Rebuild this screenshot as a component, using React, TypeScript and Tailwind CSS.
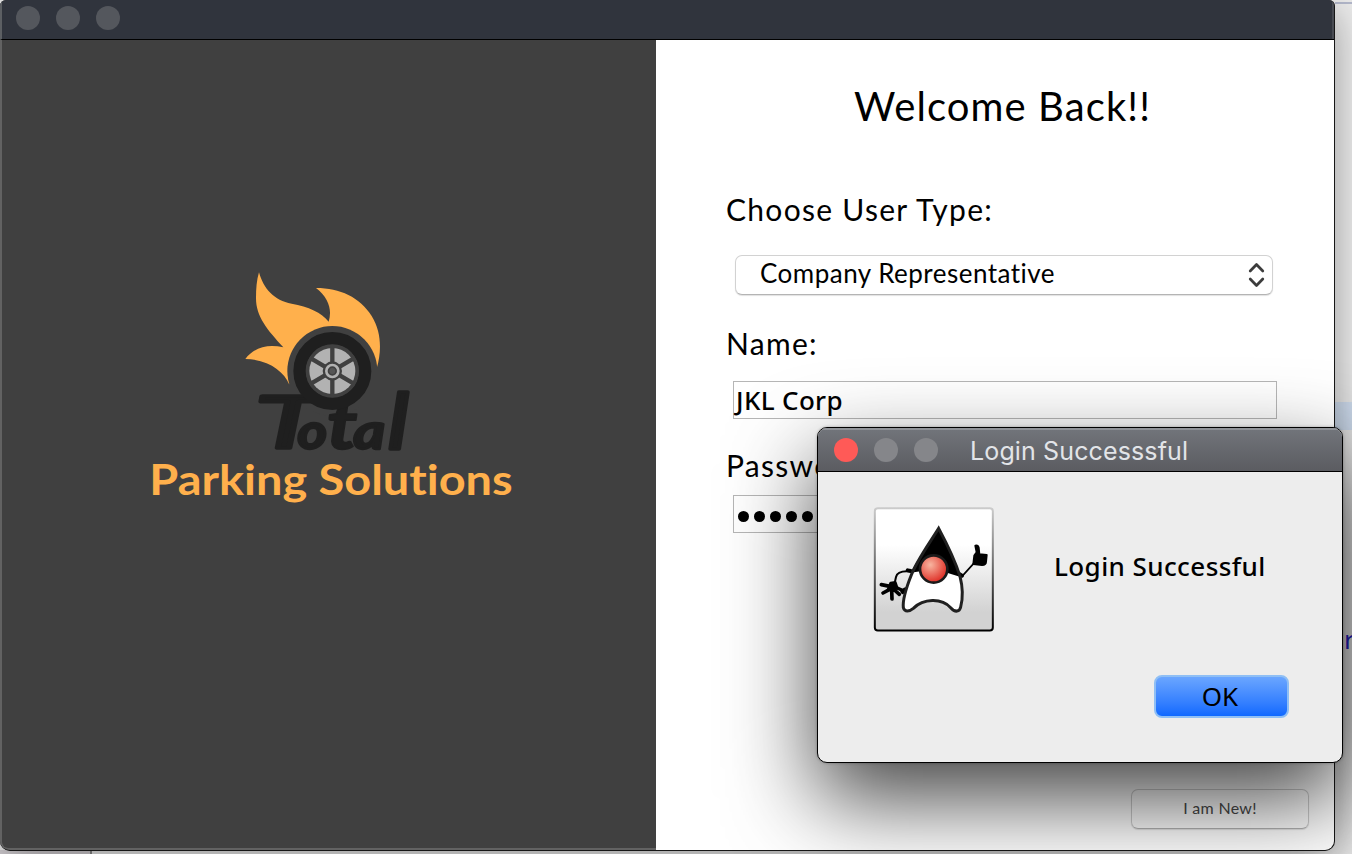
function Logo() {
  return (
    <svg width="390" height="260" viewBox="0 0 1170 780" className="block">
      <path
        fill="#ffb04c"
        d="M357 37C370 85 402 122 455 131C505 140 545 157 566 185C577 150 566 113 528 84C600 84 660 112 695 168C726 218 724 275 711 322L577 400L447 372C432 335 385 298 316 297C342 262 382 252 430 262C382 210 348 170 348 115C348 85 350 60 357 37Z"
      />
      <circle cx="577" cy="333" r="135" fill="#404040" />
      <g fill="#1f1f1f" stroke="#1f1f1f" strokeLinejoin="round" fontFamily="Lato, sans-serif" fontStyle="italic">
        <text x="344" y="565" fontSize="214" fontWeight="400" strokeWidth="11" textLength="200" lengthAdjust="spacingAndGlyphs">T</text>
        <text x="472" y="567" fontSize="150" fontWeight="700" strokeWidth="7" textLength="90" lengthAdjust="spacingAndGlyphs">o</text>
        <text x="560" y="567" fontSize="205" fontWeight="700" strokeWidth="5" textLength="92" lengthAdjust="spacingAndGlyphs">t</text>
        <text x="640" y="567" fontSize="150" fontWeight="700" strokeWidth="7" textLength="96" lengthAdjust="spacingAndGlyphs">a</text>
        <text x="742" y="567" fontSize="232" fontWeight="400" strokeWidth="10" textLength="66" lengthAdjust="spacingAndGlyphs">l</text>
      </g>
      <circle cx="577" cy="333" r="98" fill="none" stroke="#1f1f1f" strokeWidth="38" />
      <circle cx="577" cy="333" r="80" fill="#404040" />
      <circle cx="577" cy="333" r="69" fill="#b2b2b2" />
      <g stroke="#404040" strokeWidth="13">
        <path d="M577 260V406M514 296L640 370M514 370L640 296" />
      </g>
      <circle cx="577" cy="333" r="29" fill="#404040" />
      <circle cx="577" cy="333" r="18" fill="none" stroke="#b2b2b2" strokeWidth="8" />
      <circle cx="577" cy="333" r="9" fill="#555" />
      <text
        x="28"
        y="704"
        fontSize="125"
        fontWeight="700"
        fontFamily="Lato, sans-serif"
        fill="#ffb04c"
        textLength="1090"
        lengthAdjust="spacingAndGlyphs"
        className="[font-variant-ligatures:none]"
      >
        Parking Solutions
      </text>
    </svg>
  );
}

function Duke() {
  return (
    <svg width="150" height="150" viewBox="0 0 450 450" className="block shrink-0">
      <defs>
        <linearGradient id="tile" x1="0" y1="0" x2="0" y2="1">
          <stop offset="0.3" stopColor="#fff" />
          <stop offset="0.85" stopColor="#d2d2d2" />
        </linearGradient>
        <linearGradient id="edge" x1="0" y1="0" x2="0" y2="1">
          <stop offset="0" stopColor="#cbcbcb" />
          <stop offset="1" stopColor="#000" />
        </linearGradient>
        <radialGradient id="nose" cx="0.38" cy="0.35" r="0.65">
          <stop offset="0" stopColor="#f8b5a0" />
          <stop offset="1" stopColor="#df3027" />
        </radialGradient>
      </defs>
      <rect x="44.500" y="39.500" width="354" height="367" rx="9" fill="url(#tile)" stroke="url(#edge)" strokeWidth="6" />
      <g stroke="#000" fill="none" strokeLinecap="round" strokeLinejoin="round">
        <path d="M150 229Q112 226 108 246L104 264" strokeWidth="6" />
        <path d="M143 226L152 228" strokeWidth="12" />
        <path d="M132 288L110 278" strokeWidth="10" />
        <path d="M128 290L136 284" strokeWidth="14" />
        <path d="M92 264L106 262L112 280L84 284Z" fill="#000" strokeWidth="8" />
        <path d="M90 274L64 269M88 284L69 294M95 284L96 312M100 282L118 298" strokeWidth="11" />
        <path d="M306 244L344 202" strokeWidth="5" />
        <path d="M296 236L306 242" strokeWidth="12" />
        <path d="M343 182L340 207L366 210Q378 209 378 200L380 180L358 178L356 158Q354 150 346 152L350 172Z" fill="#000" strokeWidth="6" />
      </g>
      <path d="M236 100C205 150 170 198 154 240C136 285 128 320 130 338C134 352 148 350 160 340C190 310 245 308 272 338C286 354 299 350 302 336C310 305 308 275 300 244C285 195 260 145 236 100Z" fill="#fff" />
      <path d="M236 100C205 150 170 198 152 233L186 228L256 232L302 246C285 195 260 145 236 100Z" fill="#000" />
      <path
        d="M236 100C205 150 170 198 154 240C136 285 128 320 130 338C134 352 148 350 160 340C190 310 245 308 272 338C286 354 299 350 302 336C310 305 308 275 300 244C285 195 260 145 236 100Z"
        fill="none"
        stroke="#202020"
        strokeWidth="9"
      />
      <circle cx="221" cy="222" r="41" fill="url(#nose)" stroke="#1a1a1a" strokeWidth="8" />
    </svg>
  );
}

function Lights({ first, rest }: { first: string; rest: string }) {
  return (
    <div className="flex gap-4">
      <span className={`size-6 rounded-full ${first}`} />
      <span className={`size-6 rounded-full ${rest}`} />
      <span className={`size-6 rounded-full ${rest}`} />
    </div>
  );
}

const label = "overflow-hidden whitespace-nowrap text-[30px] leading-[38px] h-[36px] tracking-[1.28px]";

function LoginForm() {
  return (
    <div className="flex h-[810px] flex-1 flex-col bg-white font-['Lato',sans-serif] text-black">
      <h1 className="mt-[42px] ml-[15px] text-center text-[40px] leading-[48px] tracking-[1.1px]">Welcome Back!!</h1>
      <div className={`${label} mt-[60px] ml-[70px]`}>Choose User Type:</div>
      <div className="mt-[29px] ml-[79px] flex h-[40px] w-[538px] items-center justify-between rounded-[7px] border border-[#d2d2d2] border-b-[#b4b4b4] bg-white pr-[7px] pl-6 shadow-[0_1px_1px_rgba(0,0,0,0.12)]">
        <span className="pb-[5px] text-[26px] leading-[32px] tracking-[0.48px]">Company Representative</span>
        <svg width="17" height="26" viewBox="0 0 17 26" fill="none" stroke="#3c3c3c" strokeWidth="2.700" strokeLinecap="round" strokeLinejoin="round">
          <path d="M2.200 9L8.500 2.500L14.800 9M2.200 17L8.500 23.500L14.800 17" />
        </svg>
      </div>
      <div className={`${label} mt-[29px] ml-[70px]`}>Name:</div>
      <div className="mt-[21px] ml-[77px] h-[38px] w-[544px] border border-[#b6b6b6] pl-[2px] font-['Noto_Sans',sans-serif] text-[26px] leading-[36px] font-medium tracking-[0.35px]">
        JKL Corp
      </div>
      <div className={`${label} mt-[27px] ml-[70px]`}>Password:</div>
      <div className="mt-[13px] ml-[77px] flex h-[38px] w-[544px] items-center gap-[5px] border border-[#b6b6b6] pt-[4px] pl-[4px]">
        <span className="size-[11px] rounded-full bg-black" />
        <span className="size-[11px] rounded-full bg-black" />
        <span className="size-[11px] rounded-full bg-black" />
        <span className="size-[11px] rounded-full bg-black" />
        <span className="size-[11px] rounded-full bg-black" />
      </div>
      <button className="mt-[256px] mr-[25px] h-[40px] w-[178px] self-end rounded-[7px] border border-[#cfcfcf] border-b-[#b4b4b4] pb-[2px] text-[16px] tracking-[0.3px] text-[#4a4a4a] shadow-[0_1px_1px_rgba(0,0,0,0.12)]">
        I am New!
      </button>
    </div>
  );
}

function Dialog() {
  return (
    <div className="absolute top-[427px] left-[817px] flex h-[336px] w-[526px] flex-col overflow-hidden rounded-[10px] border border-black bg-[#ededed] shadow-[0_36px_88px_rgba(0,0,0,0.74),0_0_3px_rgba(0,0,0,0.3)]">
      <div className="flex h-[44px] shrink-0 items-center border-b border-black bg-linear-to-b from-[#72757b] to-[#5b5c61] pt-px pl-4 shadow-[inset_0_2px_0_#8f9297]">
        <Lights first="bg-[#ff5a57]" rest="bg-[#85868a]" />
        <span className="ml-[32px] pt-[2px] font-['Inter',sans-serif] text-[25px] leading-[30px] tracking-[0.13px] text-[#e2e4e8]">
          Login Successsful
        </span>
      </div>
      <div className="flex">
        <div className="mt-[23px] ml-[42px]">
          <Duke />
        </div>
        <div className="mt-[75px] ml-[44px] font-['Noto_Sans',sans-serif] text-[26px] leading-[38px] font-medium tracking-[0.42px] text-black">
          Login Successful
        </div>
      </div>
      <button className="mt-[30px] mr-[53px] h-[43px] w-[135px] self-end rounded-[8px] border-2 border-[#8fbff5] bg-linear-to-b from-[#6ea8ff] to-[#0565ff] bg-origin-border pr-[3px] pb-px font-['Noto_Sans',sans-serif] text-[26px] leading-[38px] font-normal text-black">
        OK
      </button>
    </div>
  );
}

export default function App() {
  return (
    <div className="relative h-[854px] w-[1352px] overflow-hidden bg-[#ececec]">
      <div className="absolute top-[2px] right-0 h-[2px] w-[17px] bg-[#b4b9cc]" />
      <div className="absolute top-[402px] right-0 h-[28px] w-[17px] bg-[#d3e1f3]" />
      <div className="absolute top-[622px] left-[1344px] font-['Noto_Sans',sans-serif] text-[26px] leading-[34px] text-[#2420c8]">r</div>
      <div className="absolute top-[850px] left-0 h-[4px] w-[92px] border-r-2 border-[#8a8a8a] bg-[#d4d0d4]" />
      <div className="relative flex h-[851px] w-[1335px] flex-col overflow-hidden rounded-[10px] rounded-t-[6px] border-r border-b border-[#161616] bg-[#404040] shadow-[0_10px_40px_rgba(0,0,0,0.36)]">
        <div className="flex h-[40px] shrink-0 items-center border-b border-black border-l-2 border-l-[#5c5f63] bg-[#30343d] pb-[4px] pl-[14px] shadow-[inset_-2px_0_0_#484b52]">
          <Lights first="bg-[#54575d]" rest="bg-[#54575d]" />
        </div>
        <div className="flex">
          <div className="h-[810px] w-[656px] rounded-bl-[8px] border-b-2 border-l-2 border-[#626262] bg-[#404040] pt-[220px] pl-[138px]">
            <Logo />
          </div>
          <LoginForm />
        </div>
      </div>
      <Dialog />
    </div>
  );
}
